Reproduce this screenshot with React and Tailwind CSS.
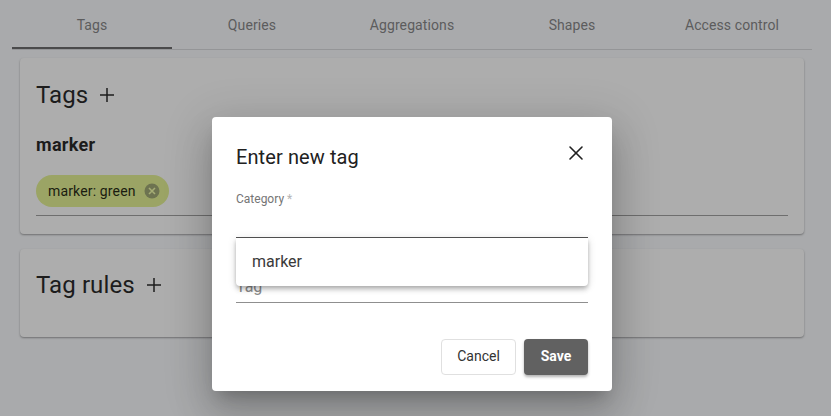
import React from 'react';
import { X } from 'lucide-react';

const tabs = ['Tags', 'Queries', 'Aggregations', 'Shapes', 'Access control'];

const Tabs = () => (
  <div className="mx-3 flex w-[800px] border-b border-[#949597]">
    {tabs.map((tab, i) => (
      <div
        key={tab}
        className={`flex h-[49px] w-40 items-center justify-center text-sm tracking-[0.1px] text-[#5c5c5d] ${i === 0 ? 'mb-[-1px] border-b-2 border-[#4a4a4b] pt-[2px]' : 'pt-[1px]'}`}
      >
        {tab}
      </div>
    ))}
  </div>
);

const PlusIcon = () => (
  <svg width="16" height="16" viewBox="0 0 16 16" className="text-[#1c1c1c]">
    <path d="M8 1v14M1 8h14" stroke="currentColor" strokeWidth="1.5" fill="none" />
  </svg>
);

const Card = ({ className, title, children }) => (
  <div className={`rounded bg-[#adadad] px-4 shadow-[0_1px_2px_rgba(0,0,0,0.35)] ${className}`}>
    <div className="flex items-center gap-[11px] text-2xl leading-8 tracking-[0.1px] text-[#1c1c1c]">
      <span>{title}</span>
      <PlusIcon />
    </div>
    {children}
  </div>
);

const Chip = () => (
  <div className="flex h-8 w-[133px] items-center gap-2 rounded-2xl bg-[#9ba465] pl-3 text-sm tracking-[0.15px] text-[#1a1c10]">
    <span>marker: green</span>
    <svg width="16" height="16" viewBox="0 0 16 16">
      <circle cx="8" cy="8" r="7.5" fill="#6d7350" />
      <path d="M5 5l6 6M11 5l-6 6" stroke="#a5ad75" strokeWidth="1.6" />
    </svg>
  </div>
);

const Dialog = () => (
  <div className="absolute left-[212px] top-[117px] h-[274px] w-[400px] rounded bg-white px-6 shadow-[0_11px_15px_-7px_rgba(0,0,0,0.2),0_24px_38px_3px_rgba(0,0,0,0.14),0_9px_46px_8px_rgba(0,0,0,0.12)]">
    <div className="flex h-[74px] items-start justify-between pt-6">
      <span className="text-xl leading-8 tracking-[0.1px] text-[#212121]">Enter new tag</span>
      <X size={24} strokeWidth={1.6} className="text-[#212121]" />
    </div>
    <div className="h-[47px] border-b border-[#555555] text-xs leading-4 text-[#757575]">
      Category <span className="text-[#b5b5b5]">*</span>
    </div>
    <div className="h-[65px] border-b border-[#8f8f8f] pt-[39px] text-base leading-5 text-[#8a8a8a]">
      Tag
    </div>
    <div className="mt-9 flex justify-end gap-2">
      <button className="h-9 w-[75px] rounded border border-[#e0e0e0] bg-white pb-[2px] text-sm text-[#333333]">
        Cancel
      </button>
      <button className="h-9 w-16 rounded bg-[#616161] pb-[2px] text-sm font-bold text-white shadow-[0_2px_3px_rgba(0,0,0,0.3)]">
        Save
      </button>
    </div>
    <div className="absolute left-6 top-[121px] flex h-[48px] w-[352px] items-center rounded-b bg-white px-4 text-base text-[#3a3a3a] shadow-[0_2px_4px_-1px_rgba(0,0,0,0.2),0_4px_5px_0_rgba(0,0,0,0.14),0_1px_10px_0_rgba(0,0,0,0.12)]">
      marker
    </div>
  </div>
);

export default function App() {
  return (
    <div className="relative h-[416px] w-[831px] overflow-hidden bg-[#a9aaac] font-['Roboto',sans-serif]">
      <Tabs />
      <div className="ml-5 mt-2 flex w-[784px] flex-col gap-[15px]">
        <Card className="h-[176px] pt-[21px]" title="Tags">
          <div className="mt-[22px] text-lg font-bold leading-6 tracking-[0.3px] text-[#1c1c1c]">marker</div>
          <div className="mt-[18px] border-b border-[#6e6e6e] pb-2">
            <Chip />
          </div>
        </Card>
        <Card className="h-[88px] pt-5" title="Tag rules" />
      </div>
      <Dialog />
    </div>
  );
}
